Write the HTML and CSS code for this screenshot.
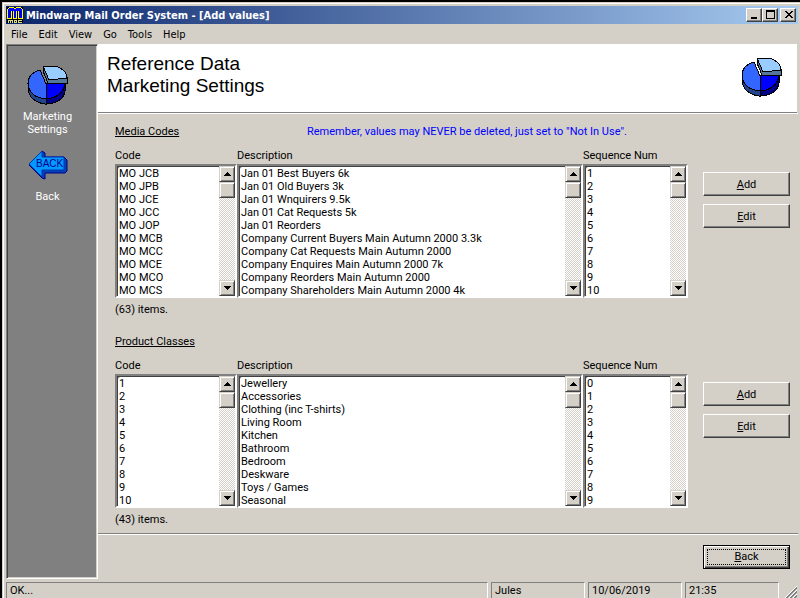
FILE: index.html
```html
<!DOCTYPE html>
<html lang="en"><head><meta charset="utf-8"><title>Mindwarp Mail Order System</title><link rel="stylesheet" href="styles.css"></head>
<body>
<svg class="defs" width="0" height="0" aria-hidden="true">
<symbol id="pie" viewBox="0 0 41 40" shape-rendering="crispEdges">
<path d="M1 19V25C2 32 9 38 18 39H20C31 38 37 33 38 26V18Z" fill="#224488" stroke="#000"/>
<path d="M19 33V39H20C31 38 37 33 38 26V18Z" fill="#000088" stroke="#000"/>
<path d="M13 5L19 19V34C9 33 2 28 1 19C1 12 5 7 13 5Z" fill="#3366ff" stroke="#000"/>
<path d="M19 19L38 17C38 26 31 33 19 34Z" fill="#0000ff" stroke="#000"/>
<path d="M16 1V6L21 18L40 18V13L22 15Z" fill="#557799" stroke="#000"/>
<path d="M16 1H28C35 3 40 7 40 13L22 15Z" fill="#99ccff" stroke="#000"/>
</symbol>
<symbol id="up" viewBox="0 0 7 4" shape-rendering="crispEdges"><path d="M3 0h1v1h1v1h1v1h1v1H0V3h1V2h1V1h1z"/></symbol>
<symbol id="down" viewBox="0 0 7 4" shape-rendering="crispEdges"><path d="M0 0h7v1H6v1H5v1H4v1H3V3H2V2H1V1H0z"/></symbol>
</svg>
<div class="window">
<header class="titlebar">
<svg class="appicon" viewBox="0 0 16 16" shape-rendering="crispEdges" aria-hidden="true"><path d="M0 0h16v16H0z"/><path d="M1 11V2h1V1h5v1h2V1h5v1h1v9h-4V4h-1v7H6V4H5v7z" fill="#00f"/><path d="M0 2h1v9H0zM1 1h1v1H1zM2 0h5v1H2zM7 1h2v1H7zM9 0h5v1H9zM14 1h1v1h-1zM15 2h1v9h-1zM4 4h1v7H4zM6 4h1v7H6zM9 4h1v7H9zM11 4h1v7h-1zM0 11h5v1H0zM6 11h4v1H6zM11 11h5v1h-5z" fill="#ff0"/><path d="M1 13h5v3H5v-2H4v2H3v-2H2v2H1zM7 13h3v3H7zM8 14v1h1v-1zM11 13h4v1h-3v1h3v1h-4z" fill="#dd8" fill-rule="evenodd"/></svg>
<h1>Mindwarp Mail Order System - [Add values]</h1>
<div class="winbtns">
<button aria-label="Minimize"><svg viewBox="0 0 12 10" shape-rendering="crispEdges"><path d="M2 7h6v2H2z"/></svg></button>
<button aria-label="Maximize"><svg viewBox="0 0 12 10" shape-rendering="crispEdges"><path d="M1 0h9v9H1zM2 2v6h7V2z" fill-rule="evenodd"/></svg></button>
<button class="close" aria-label="Close"><svg viewBox="0 0 12 10" shape-rendering="crispEdges"><path d="M2 1h2v1h1v1h2V2h1V1h2v1H9v1H8v1H7v1h1v1h1v1h1v1H8V7H7V6H5v1H4v1H2V7h1V6h1V5h1V4H4V3H3V2H2z"/></svg></button>
</div>
</header>
<nav class="menu"><button>File</button><button>Edit</button><button>View</button><button>Go</button><button>Tools</button><button>Help</button></nav>
<div class="body">
<aside class="side">
<a href="#marketing"><svg class="pie" aria-hidden="true"><use href="#pie"/></svg><span>Marketing<br>Settings</span></a>
<a href="#back"><svg class="arrow" viewBox="0 0 40 30" aria-hidden="true"><path d="M14 1L17 3V7H36L39 10V21L37 23H17V29L14 28L1 15Z" fill="#0044bb" stroke="#000088"/><path d="M1 14L14 1V7H36V20H14V27Z" fill="#0099ff" stroke="#0033aa"/><text x="8" y="17">BACK</text></svg><span>Back</span></a>
</aside>
<main>
<header class="head"><h2>Reference Data<br>Marketing Settings</h2><svg class="pie" aria-hidden="true"><use href="#pie"/></svg></header>
<div class="content" id="content"></div>
<footer class="foot"><button class="btn default"><span><u>B</u>ack</span></button></footer>
</main>
</div>
<div class="status"><span class="ok">OK...</span><span>Jules</span><span>10/06/2019</span><span>21:35</span><svg viewBox="0 0 12 12" aria-hidden="true"><path d="M0 12L12 0M4 12L12 4M8 12L12 8" stroke="#fff"/><path d="M1 12L12 1M2 12L12 2M5 12L12 5M6 12L12 6M9 12L12 9M10 12L12 10" stroke="#808080"/></svg></div>
</div>
<script src="lists.js"></script>
</body></html>
```
FILE: lists.js
```js
const groups = [
  { id: 'media', title: 'Media Codes', note: 'Remember, values may NEVER be deleted, just set to "Not In Use".', count: 63,
    codes: ['MO JCB','MO JPB','MO JCE','MO JCC','MO JOP','MO MCB','MO MCC','MO MCE','MO MCO','MO MCS'],
    text: ['Jan 01 Best Buyers 6k','Jan 01 Old Buyers 3k','Jan 01 Wnquirers 9.5k','Jan 01 Cat Requests 5k','Jan 01 Reorders','Company Current Buyers Main Autumn 2000 3.3k','Company Cat Requests Main Autumn 2000','Company Enquires Main Autumn 2000 7k','Company Reorders Main Autumn 2000','Company Shareholders Main Autumn 2000 4k'],
    seq: [1,2,3,4,5,6,7,8,9,10] },
  { id: 'product', title: 'Product Classes', note: '', count: 43,
    codes: [1,2,3,4,5,6,7,8,9,10],
    text: ['Jewellery','Accessories','Clothing (inc T-shirts)','Living Room','Kitchen','Bathroom','Bedroom','Deskware','Toys / Games','Seasonal'],
    seq: [0,1,2,3,4,5,6,7,8,9] }
];
const list = (id, label, rows) => `<div class="col"><label for="${id}">${label}</label><div class="box"><select id="${id}" size="10">${rows.map(r => `<option>${r}</option>`).join('')}</select><div class="bar"><button aria-label="Scroll up"><svg><use href="#up"/></svg></button><i class="thumb"></i><button class="end" aria-label="Scroll down"><svg><use href="#down"/></svg></button></div></div></div>`;
document.getElementById('content').innerHTML = groups.map(g => `<section class="group">
<div class="caption"><h3>${g.title}</h3><p>${g.note}</p></div>
<div class="row"><div class="lists">${list(g.id + '-code', 'Code', g.codes)}${list(g.id + '-text', 'Description', g.text)}${list(g.id + '-seq', 'Sequence Num', g.seq)}</div>
<div class="actions"><button class="btn"><span><u>A</u>dd</span></button><button class="btn"><span><u>E</u>dit</span></button></div></div>
<p class="count">(${g.count}) items.</p></section>`).join('');
```
FILE: styles.css
```css
*{box-sizing:border-box}
html,body{height:100%}
body{margin:0;background:#000;color:#000;font:11px/13px Roboto,"Liberation Sans",sans-serif;overflow:hidden}
h1,h2,h3,p{margin:0;font-size:inherit;font-weight:normal}
button{font:inherit;color:inherit;padding:0;border:0;background:#d4d0c8}
.defs{position:absolute}
.window{display:flex;flex-direction:column;height:100%;padding:4px 2px 0 4px;background:#d4d0c8;border:solid #000;border-width:2px 0 0 2px;box-shadow:inset 1px 1px #d4d0c8,inset 2px 2px #fff}
.titlebar{display:flex;align-items:center;height:18px;flex:none;padding:0 2px 0 1px;background:linear-gradient(90deg,#0a246a,#a6caf0);color:#fff;font-family:"DejaVu Sans Condensed","DejaVu Sans",sans-serif}
.titlebar h1{flex:1;margin-left:3px;font-weight:bold}
.appicon{width:16px;height:16px}
.winbtns{display:flex}
.winbtns button{width:16px;height:14px;padding:1px 2px;border:1px solid;border-color:#fff #404040 #404040 #fff;box-shadow:inset -1px -1px #808080}
.winbtns .close{margin-left:2px}
.winbtns svg{display:block;width:12px;height:10px}
.menu{display:flex;gap:11px;height:20px;flex:none;padding:0 5px;font-family:"DejaVu Sans Condensed","DejaVu Sans",sans-serif}
.body{display:flex;flex:1;min-height:0}
.side{display:flex;flex-direction:column;gap:14px;flex:none;width:92px;padding:20px 9px 0 0;background:#808080;border:1px solid;border-color:#808080 #fff #fff #808080;box-shadow:inset 1px 1px #404040,inset -1px -1px #d4d0c8;color:#fff;text-align:center}
.side a{display:flex;flex-direction:column;align-items:center;gap:5px;color:inherit;text-decoration:none}
.side a+a{gap:10px}
.pie{display:block;width:41px;height:40px;flex:none}
.arrow{width:40px;height:30px}
.arrow text{font:10px "Liberation Sans",sans-serif;fill:#008}
main{display:flex;flex-direction:column;flex:1;min-width:0}
.head{display:flex;justify-content:space-between;height:69px;flex:none;padding:9px 15px 0 9px;margin-right:1px;background:#fff;border-bottom:1px solid #808080}
.head h2{font:19px/22px "Liberation Sans",sans-serif}
.head .pie{margin-top:4px}
.content{padding:11px 8px 0 17px;flex:1;min-height:0;border-top:1px solid #fff}
.group+.group{margin-top:19px}
.caption{display:flex}
.caption h3{width:192px;text-decoration:underline}
.caption p{color:#00f}
.row{display:flex;gap:15px;margin-top:11px}
.lists{display:grid;grid-template-columns:122fr 346fr 105fr;flex:1}
.col label{display:block;height:15px}
.box{display:flex;height:134px;border:2px solid;border-color:#808080 #fff #fff #808080;box-shadow:inset 1px 1px #404040;background:#fff}
.box select{flex:1;min-width:0;height:130px;margin:0;padding:1px 0 0 1px;border:0;outline:0;appearance:none;background:none;font:inherit;color:inherit;overflow:hidden;box-shadow:inset 1px 1px #404040}
.box option{height:13px;min-height:13px;padding:0 1px;line-height:13px}
.bar{display:flex;flex-direction:column;width:16px;background:repeating-conic-gradient(#fff 0 25%,#d4d0c8 0 50%) 0 0/2px 2px}
.bar button,.thumb{height:16px;border:1px solid;border-color:#d4d0c8 #404040 #404040 #d4d0c8;box-shadow:inset 1px 1px #fff,inset -1px -1px #808080;background:#d4d0c8}
.bar svg{display:block;width:7px;height:4px;margin:0 auto}
.bar .end{margin-top:auto}
.actions{display:flex;flex-direction:column;gap:8px;width:87px;margin-top:23px}
.btn{width:87px;height:24px;border:1px solid;border-color:#fff #404040 #404040 #fff;box-shadow:inset -1px -1px #808080}
.count{margin-top:5px}
.foot{display:flex;justify-content:flex-end;height:46px;flex:none;padding:11px 8px 0 0;border-top:1px solid #808080;box-shadow:inset 0 1px #fff}
.btn.default{border-color:#000;box-shadow:inset 1px 1px #fff,inset -1px -1px #404040,inset -2px -2px #808080;padding:3px}
.btn.default span{display:block;border:1px dotted #000;line-height:14px}
.status{display:flex;gap:3px;height:19px;flex:none;padding-top:3px}
.status span{width:94px;padding:1px 3px;border:solid;border-width:1px 1px 0;border-color:#808080 #fff #fff #808080}
.status .ok{flex:1}
.status svg{width:12px;height:12px;margin:4px 1px 0 3px}
```
